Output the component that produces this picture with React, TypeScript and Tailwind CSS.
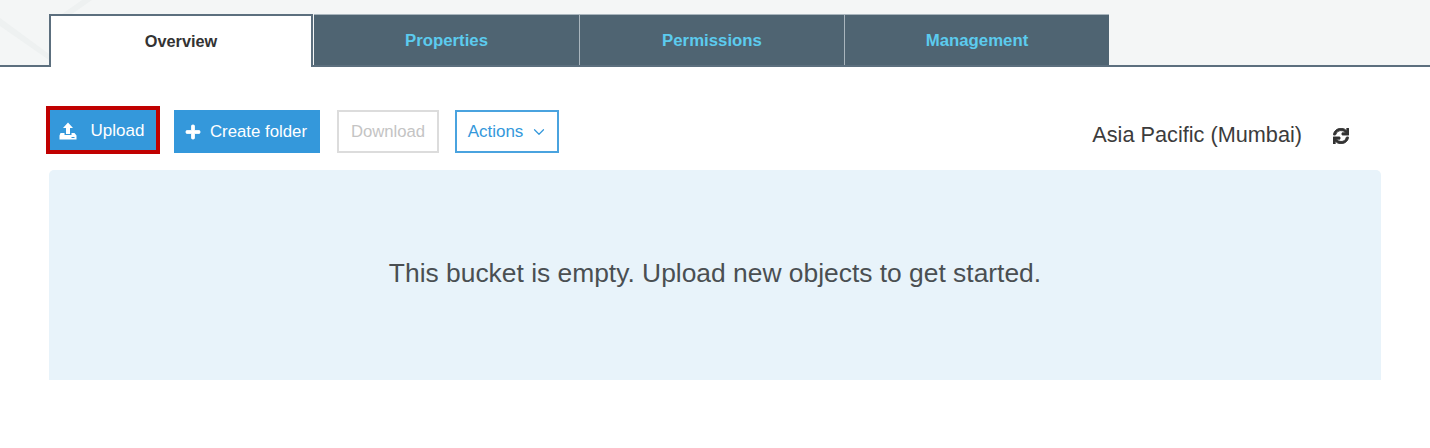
import React from 'react';
import { ChevronDown } from 'lucide-react';
import { FaPlus, FaSync } from 'react-icons/fa';

const tabs = [
  { label: 'Properties', width: 'w-[266px]' },
  { label: 'Permissions', width: 'w-[265px]' },
  { label: 'Management', width: 'w-[264px]' },
];

function UploadIcon() {
  return (
    <svg viewBox="0 0 18 18" className="w-[18px] h-[18px]" fill="#fff">
      <path d="M9 0.5 L14 6 H11 V12 H7 V6 H4 Z" />
      <path d="M1.5 11 H5.5 V13 H12.5 V11 H15.5 L17.5 13.5 V17.5 H0.5 V13.5 Z" />
      <rect x="12.5" y="15" width="3" height="1" fill="#3498db" />
    </svg>
  );
}

export default function App() {
  return (
    <div className="w-[1430px] h-[448px] bg-white font-['Liberation_Sans',Arial,sans-serif] overflow-hidden">
      {/* Tab strip */}
      <div className="relative h-[67px] bg-[#f4f6f6] border-b-2 border-[#5c6f7e] pl-[49px] pt-[14px] flex items-stretch">
        <svg className="absolute left-0 top-0 w-[120px] h-[65px]" viewBox="0 0 120 65" fill="none">
          <path d="M0 18 L49 54 V60 L0 26 Z" fill="#eef1f1" />
          <path d="M62 14 L82 0 H92 L72 14 Z" fill="#eef1f1" />
        </svg>
        <div className="relative w-[264px] h-[53px] -mb-[2px] bg-white border-2 border-b-0 border-[#5c6f7e] flex items-center justify-center text-[16.3px] font-bold text-[#333]">
          Overview
        </div>
        <div className="relative flex ml-[1px]">
          {tabs.map((tab) => (
            <div
              key={tab.label}
              className={`${tab.width} h-[51px] bg-[#4f6472] border-t border-r border-[#a9b5bd] flex items-center justify-center pt-[1px] text-[16.8px] font-bold text-[#5ccbee] last:border-r-0`}
            >
              {tab.label}
            </div>
          ))}
        </div>
      </div>

      {/* Toolbar */}
      <div className="flex items-start h-[103px] pl-[46px] pr-[81px] pt-[39px]">
        <button className="flex items-center justify-center w-[114px] h-[48px] border-[4px] border-[#c00000] bg-[#3498db] text-white text-[17px] gap-[14px] pr-[3px] pt-[2px]">
          <UploadIcon />
          Upload
        </button>
        <button className="ml-[14px] mt-[4px] flex items-center justify-center w-[146px] h-[43px] bg-[#3498db] text-white text-[16.8px] gap-[9px] pr-[2px]">
          <FaPlus className="w-[16px] h-[16px] stroke-white stroke-[25px]" />
          Create folder
        </button>
        <button className="ml-[17px] mt-[4px] flex items-center justify-center w-[102px] h-[43px] border-2 border-[#dcdcdc] bg-white text-[#c4c4c4] text-[16.7px]">
          Download
        </button>
        <button className="ml-[16px] mt-[4px] flex items-center justify-center w-[104px] h-[43px] border-2 border-[#4aa3df] bg-white text-[#3498db] text-[17px] gap-[7px] pl-[2px]">
          Actions
          <ChevronDown className="w-[18px] h-[18px]" strokeWidth={1.6} />
        </button>
        <div className="ml-auto mt-[13px] flex items-center gap-[31px] text-[21.7px] text-[#3c3c3c]">
          <span>Asia Pacific (Mumbai)</span>
          <FaSync className="mt-[2px] w-[16px] h-[16px] text-[#333] stroke-[#333] stroke-[30px]" />
        </div>
      </div>

      {/* Empty state */}
      <div className="ml-[49px] w-[1332px] h-[210px] bg-[#e8f3fa] rounded-t-[5px] flex items-center justify-center text-[26.4px] text-[#4a4f52] pb-[2px]">
        This bucket is empty. Upload new objects to get started.
      </div>
    </div>
  );
}
